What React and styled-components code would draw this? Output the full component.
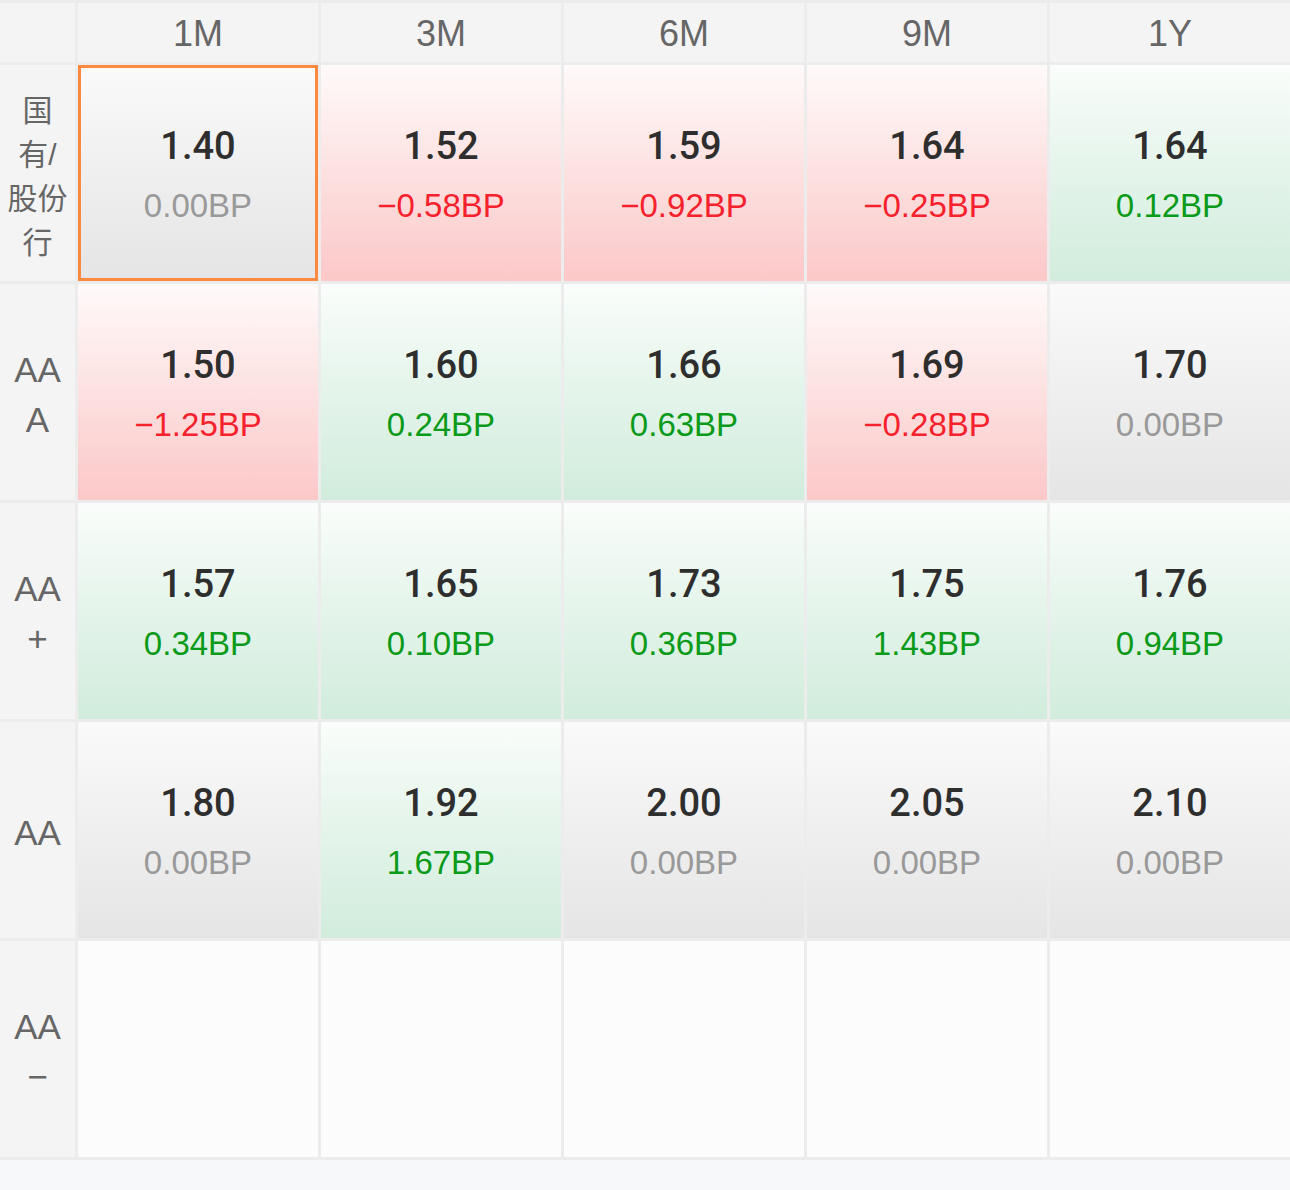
import React from "react";
import styled, { createGlobalStyle, css } from "styled-components";

const GlobalStyle = createGlobalStyle`
    html, body {
        margin: 0;
        padding: 0;
        background: #f7f8fa;
    }
    body {
        font-family: "Liberation Sans", "Noto Sans CJK SC", sans-serif;
    }
`;

const tenors = ["1M", "3M", "6M", "9M", "1Y"];

const rows = [
    {
        label: ["国", "有/", "股份", "行"],
        cjk: true,
        quotes: [
            { rate: "1.40", bp: "0.00" },
            { rate: "1.52", bp: "−0.58" },
            { rate: "1.59", bp: "−0.92" },
            { rate: "1.64", bp: "−0.25" },
            { rate: "1.64", bp: "0.12" },
        ],
    },
    {
        label: ["AA", "A"],
        quotes: [
            { rate: "1.50", bp: "−1.25" },
            { rate: "1.60", bp: "0.24" },
            { rate: "1.66", bp: "0.63" },
            { rate: "1.69", bp: "−0.28" },
            { rate: "1.70", bp: "0.00" },
        ],
    },
    {
        label: ["AA", "+"],
        quotes: [
            { rate: "1.57", bp: "0.34" },
            { rate: "1.65", bp: "0.10" },
            { rate: "1.73", bp: "0.36" },
            { rate: "1.75", bp: "1.43" },
            { rate: "1.76", bp: "0.94" },
        ],
    },
    {
        label: ["AA"],
        quotes: [
            { rate: "1.80", bp: "0.00" },
            { rate: "1.92", bp: "1.67" },
            { rate: "2.00", bp: "0.00" },
            { rate: "2.05", bp: "0.00" },
            { rate: "2.10", bp: "0.00" },
        ],
    },
    {
        label: ["AA", "−"],
        quotes: [null, null, null, null, null],
    },
];

const toneOf = (bp) => {
    if (bp.startsWith("−")) return "down";
    if (parseFloat(bp) > 0) return "up";
    return "flat";
};

const backgrounds = {
    down: "linear-gradient(180deg, #fffafa 0%, #fde3e3 45%, #fcc8c8 100%)",
    up: "linear-gradient(180deg, #fafdfb 0%, #e6f5ec 45%, #d1ecdc 100%)",
    flat: "linear-gradient(180deg, #fafafa 0%, #f0f0f0 45%, #e5e5e5 100%)",
};

const textColors = {
    down: "#f5222d",
    up: "#0b9a19",
    flat: "#999999",
};

const Board = styled.div`
    display: grid;
    grid-template-columns: 75px repeat(5, 240px);
    grid-template-rows: 59px repeat(5, 216px);
    gap: 3px;
    padding: 3px 0;
    background: #ececec;
`;

const Corner = styled.div`
    background: #f4f4f4;
`;

const HeaderCell = styled.div`
    display: flex;
    align-items: center;
    justify-content: center;
    padding-top: 2px;
    background: #f4f4f4;
    color: #666666;
    font-size: 36px;
`;

const RowLabel = styled.div`
    display: flex;
    flex-direction: column;
    align-items: center;
    justify-content: center;
    background: #f4f4f4;
    color: #666666;
    font-size: ${(props) => (props.$cjk ? "30px" : "35px")};
    line-height: ${(props) => (props.$cjk ? "44px" : "50px")};
    padding-top: ${(props) => (props.$cjk ? "8px" : "6px")};
`;

const LabelLine = styled.span`
    display: block;
    white-space: nowrap;
`;

const QuoteCell = styled.div`
    display: flex;
    flex-direction: column;
    align-items: center;
    justify-content: center;
    box-sizing: border-box;
    padding-top: 5px;
    background: ${(props) => backgrounds[props.$tone]};
    ${(props) =>
        props.$selected &&
        css`
            border: 3px solid #fb8a40;
        `}
`;

const EmptyCell = styled.div`
    background: #fcfcfc;
`;

const Rate = styled.div`
    color: #2e2e2e;
    font-family: "Roboto", "Liberation Sans", sans-serif;
    font-weight: 500;
    font-size: 38px;
    line-height: 60px;
`;

const Change = styled.div`
    color: ${(props) => textColors[props.$tone]};
    font-size: 33px;
    line-height: 60px;
`;

const Footer = styled.div`
    height: 27px;
    background: #f7f8fa;
`;

const App = () => {
    return (
        <>
            <GlobalStyle />
            <Board>
                <Corner />
                {tenors.map((tenor) => (
                    <HeaderCell key={tenor}>{tenor}</HeaderCell>
                ))}
                {rows.map((row, r) => (
                    <React.Fragment key={r}>
                        <RowLabel $cjk={row.cjk}>
                            {row.label.map((line, i) => (
                                <LabelLine key={i}>{line}</LabelLine>
                            ))}
                        </RowLabel>
                        {row.quotes.map((quote, c) => {
                            if (!quote) return <EmptyCell key={c} />;
                            const tone = toneOf(quote.bp);
                            return (
                                <QuoteCell
                                    key={c}
                                    $tone={tone}
                                    $selected={r === 0 && c === 0}
                                >
                                    <Rate>{quote.rate}</Rate>
                                    <Change $tone={tone}>{quote.bp}BP</Change>
                                </QuoteCell>
                            );
                        })}
                    </React.Fragment>
                ))}
            </Board>
            <Footer />
        </>
    );
};

export default App;
